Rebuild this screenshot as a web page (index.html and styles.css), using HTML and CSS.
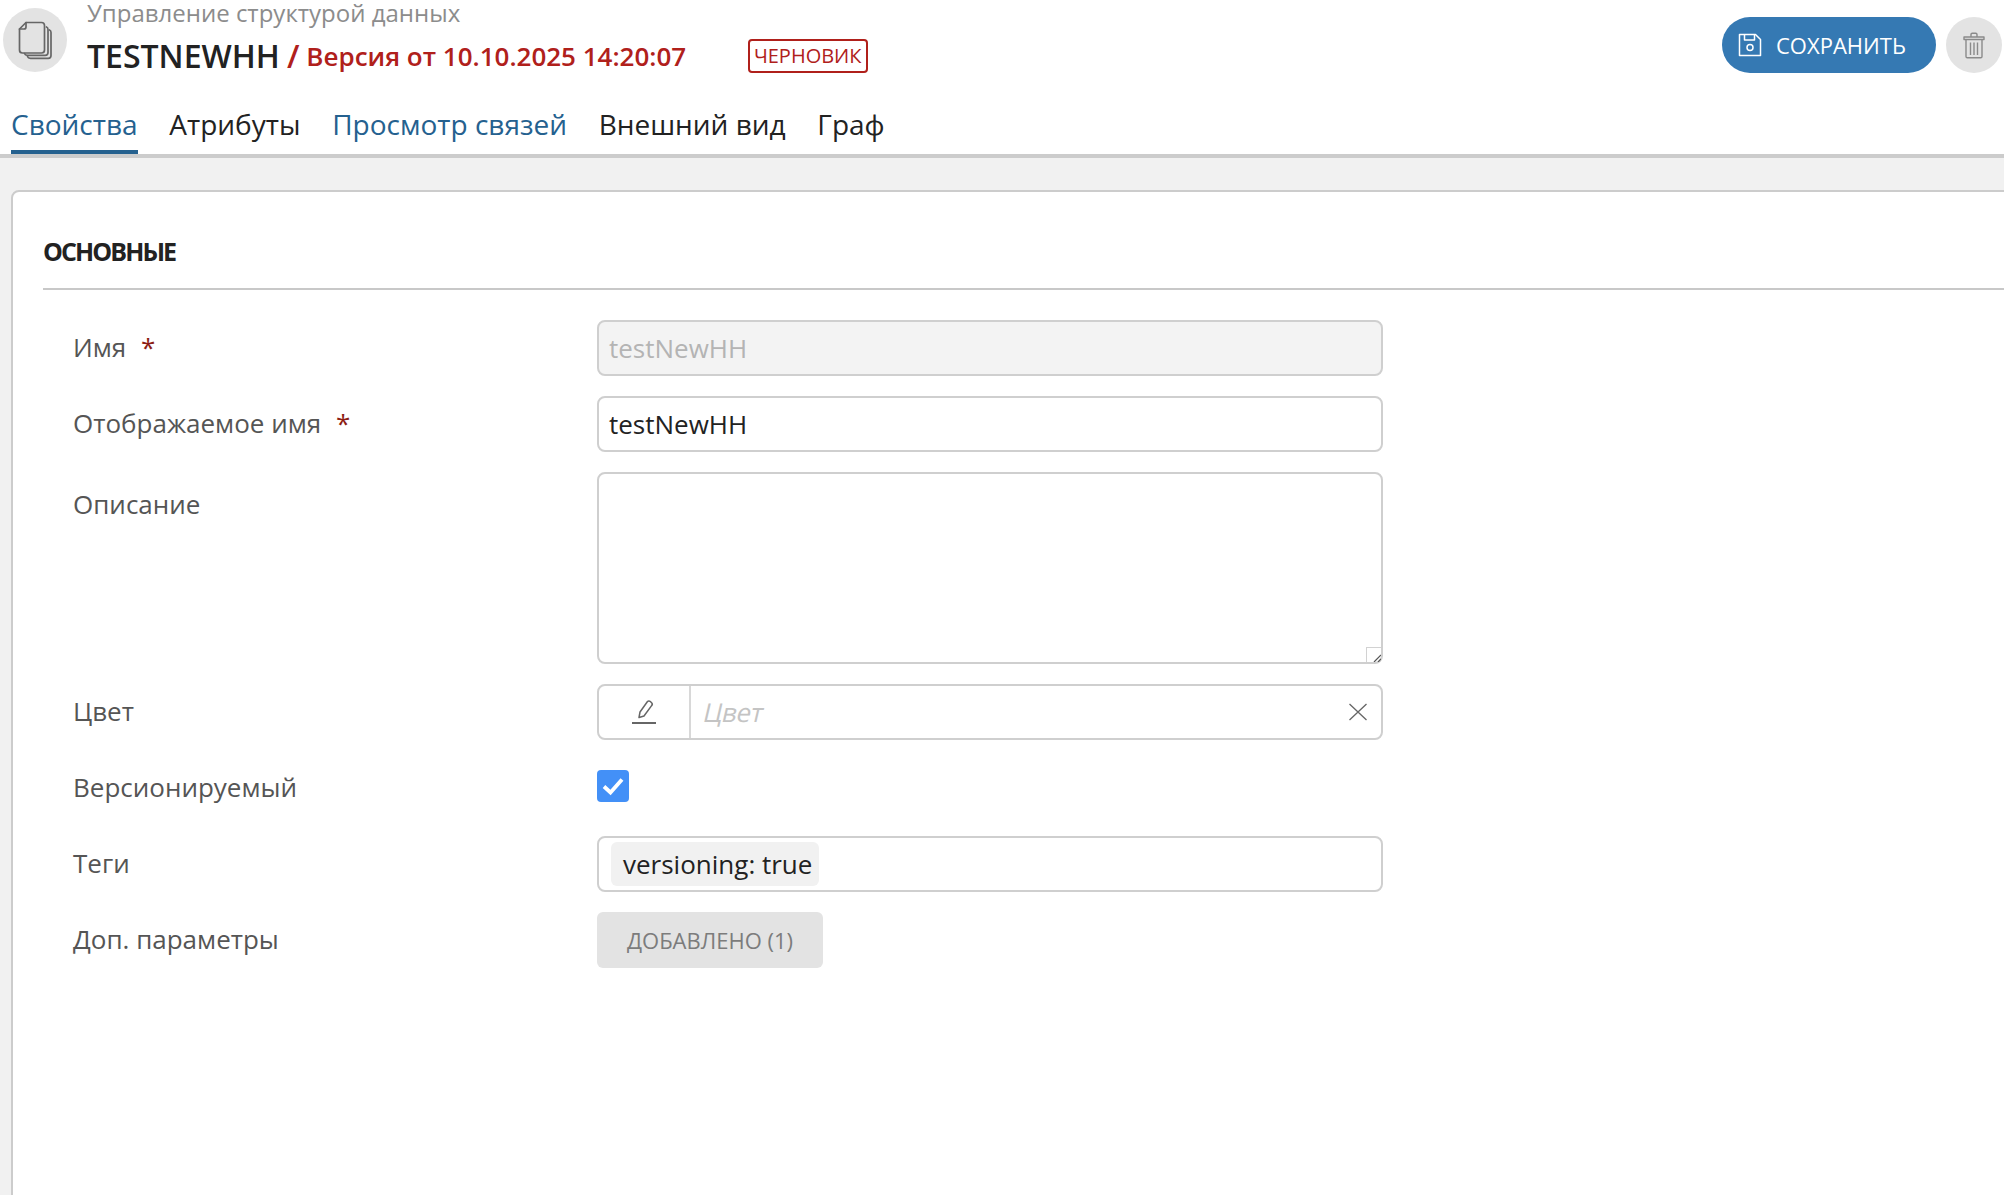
FILE: index.html
```html
<!DOCTYPE html>
<html lang="ru">
<head>
<meta charset="utf-8">
<title>Управление структурой данных</title>
<link rel="stylesheet" href="styles.css">
</head>
<body>
<div class="page">
  <header class="head">
    <div class="topbar">
      <div class="avatar">
        <svg width="34" height="39" viewBox="0 0 34 39" fill="none" stroke="#666" stroke-width="1.700" stroke-linejoin="round" stroke-linecap="round">
          <path d="M31.500 9c1 .4 1.500 1.200 1.500 2.400v23.100c0 1.700-1.100 2.800-2.800 2.800H12.500c-1.500 0-2.600-.6-3-1.800"/>
          <path d="M28.500 6c1 .4 1.500 1.200 1.500 2.400v23.100c0 1.700-1.100 2.800-2.800 2.800H9.500c-1.500 0-2.600-.6-3-1.800"/>
          <path d="M8 1.500h15.500c1.700 0 3 1.300 3 3v24.500c0 1.700-1.300 3-3 3H4.500c-1.700 0-3-1.300-3-3V8z"/>
          <path d="M8 1.500V6c0 1.200-.8 2-2 2H1.500"/>
        </svg>
      </div>
      <div class="titles">
        <div class="crumb">Управление структурой данных</div>
        <div class="titleline">
          <span class="name">TESTNEWHH</span>
          <span class="version"><span class="slash">/</span><span class="stamp">Версия от 10.10.2025 14:20:07</span></span>
          <span class="draft">ЧЕРНОВИК</span>
        </div>
      </div>
      <div class="actions">
        <button class="save" type="button">
          <svg width="24" height="24" viewBox="0 0 24 24" fill="none" stroke="#fff" stroke-width="1.500" stroke-linejoin="round">
            <path d="M1.500 1.500h16l5 5v16h-21z"/>
            <path d="M6.500 1.500v5.500h10V1.500"/>
            <circle cx="12" cy="14.500" r="3"/>
          </svg>
          <span>СОХРАНИТЬ</span>
        </button>
        <button class="trash" type="button" aria-label="Удалить">
          <svg width="22" height="27" viewBox="0 0 22 27" fill="none" stroke="#8a8a8a" stroke-width="1.400" stroke-linejoin="round">
            <path d="M1 5h20v2.500H1z"/>
            <path d="M8 5V2.500c0-.8.5-1.300 1.300-1.300h3.400c.8 0 1.300.5 1.300 1.300V5"/>
            <path d="M3 7.500V24.500c0 .8.500 1.300 1.300 1.300h13.400c.8 0 1.300-.5 1.300-1.300V7.500"/>
            <path d="M7.500 10.500v12.500M11 10.500v12.500M14.500 10.500v12.500"/>
          </svg>
        </button>
      </div>
    </div>
    <nav class="tabs">
      <a class="tab active">Свойства</a>
      <a class="tab">Атрибуты</a>
      <a class="tab link">Просмотр связей</a>
      <a class="tab">Внешний вид</a>
      <a class="tab">Граф</a>
    </nav>
  </header>
  <main class="content">
    <section class="card">
      <h2 class="section">ОСНОВНЫЕ</h2>
      <div class="form">
        <div class="row">
          <div class="label">Имя <span class="req">*</span></div>
          <div class="field input disabled">testNewHH</div>
        </div>
        <div class="row">
          <div class="label">Отображаемое имя <span class="req">*</span></div>
          <div class="field input">testNewHH</div>
        </div>
        <div class="row">
          <div class="label label-top">Описание</div>
          <div class="field area"><span class="grip"><svg width="8" height="8" viewBox="0 0 8 8" stroke="#555" stroke-width="1.200"><path d="M1 8 8 1M5 8l3-3"/></svg></span></div>
        </div>
        <div class="row">
          <div class="label">Цвет</div>
          <div class="field color">
            <span class="picker">
              <svg width="24" height="26" viewBox="0 0 24 26" fill="none" stroke="#666" stroke-width="1.500" stroke-linejoin="round">
                <path d="M7 18.500 8 13 15.500 2.500c.8-.8 2-.8 2.800 0l1.300 1.300c.8.8.8 2 0 2.800L12 17z"/>
                <path d="M0 24h24" stroke-width="2"/>
              </svg>
            </span>
            <span class="placeholder">Цвет</span>
            <svg class="clear" width="20" height="20" viewBox="0 0 20 20" stroke="#666" stroke-width="1.300"><path d="M1.500 2l17 16M18.500 2l-17 16"/></svg>
          </div>
        </div>
        <div class="row row-check">
          <div class="label">Версионируемый</div>
          <span class="check">
            <svg width="24" height="20" viewBox="0 0 24 20" fill="none" stroke="#fff" stroke-width="3.800"><path d="M3 10.500 9.500 16.500 21 3.500"/></svg>
          </span>
        </div>
        <div class="row">
          <div class="label">Теги</div>
          <div class="field tags"><span class="chip">versioning: true</span></div>
        </div>
        <div class="row">
          <div class="label">Доп. параметры</div>
          <button class="added" type="button">ДОБАВЛЕНО (1)</button>
        </div>
      </div>
    </section>
  </main>
</div>
</body>
</html>
```

FILE: styles.css
```css
html, body {
  margin: 0;
  height: 100%;
  overflow: hidden;
  background: #fff;
}
body {
  font-family: "Open Sans", "Noto Sans", sans-serif;
  color: #222;
}
.page {
  height: 100%;
  overflow: hidden;
  display: flex;
  flex-direction: column;
}
.head {
  height: 158px;
  box-sizing: border-box;
  border-bottom: 4px solid #ccc;
  display: flex;
  flex-direction: column;
  flex: none;
}
.topbar {
  display: flex;
  align-items: flex-start;
  height: 112px;
  padding-left: 3px;
}
.avatar {
  width: 64px;
  height: 64px;
  margin-top: 8px;
  border-radius: 50%;
  background: #e3e3e3;
  display: flex;
  align-items: center;
  justify-content: center;
  flex: none;
}
.titles {
  margin-left: 20px;
  flex: 1;
}
.crumb {
  font-size: 24px;
  line-height: 26px;
  color: #8c8c8c;
  height: 28px;
}
.titleline {
  display: flex;
  align-items: baseline;
  height: 56px;
  padding: 6px 0;
  box-sizing: border-box;
}
.name {
  font-size: 32px;
  font-weight: 600;
  color: #222;
}
.version {
  margin-left: 7px;
  font-size: 26px;
  font-weight: 600;
  color: #b0201b;
  width: 461px;
  white-space: nowrap;
}
.slash {
  font-size: 32px;
  margin-right: 7px;
}
.stamp {
  vertical-align: 2px;
}
.draft {
  align-self: center;
  font-size: 20px;
  line-height: 30px;
  padding: 0 4px;
  border: 2px solid #b0201b;
  border-radius: 4px;
  color: #b0201b;
}
.actions {
  display: flex;
  gap: 10px;
  margin-top: 17px;
  padding-right: 2px;
}
.save {
  width: 214px;
  height: 56px;
  border: 0;
  border-radius: 28px;
  background: #3579b3;
  color: #fff;
  font: 400 22px "Open Sans", sans-serif;
  display: flex;
  align-items: center;
  gap: 14px;
  padding: 0 0 0 16px;
}
.trash {
  width: 56px;
  height: 56px;
  border: 0;
  border-radius: 50%;
  background: #e3e3e3;
  display: flex;
  align-items: center;
  justify-content: center;
  padding: 0;
}
.tabs {
  display: flex;
  gap: 31.700px;
  padding-left: 11px;
  height: 42px;
}
.tab {
  font-size: 28px;
  line-height: 25px;
  height: 42px;
  box-sizing: border-box;
  color: #222;
  white-space: nowrap;
}
.tab.active {
  color: #25618f;
  border-bottom: 4px solid #25618f;
}
.tab.link {
  color: #25618f;
}
.content {
  flex: 1;
  background: #f1f1f1;
  padding: 32px 0 0 11px;
  min-height: 0;
}
.card {
  height: 1100px;
  margin-right: -20px;
  background: #fff;
  border: 2px solid #ccc;
  border-radius: 8px;
  padding: 0 0 0 30px;
  box-sizing: border-box;
}
.section {
  margin: 0;
  height: 98px;
  padding-top: 32px;
  line-height: 54px;
  font-size: 25px;
  font-weight: 700;
  letter-spacing: -1.900px;
  color: #222;
  border-bottom: 2px solid #c8c8c8;
  box-sizing: border-box;
}
.form {
  margin-top: 30px;
  padding-left: 30px;
  display: flex;
  flex-direction: column;
  gap: 20px;
}
.row {
  display: flex;
  align-items: flex-start;
}
.label {
  width: 524px;
  flex: none;
  font-size: 26px;
  line-height: 55px;
  color: #555;
}
.label-top {
  line-height: 64px;
}
.req {
  color: #8c1c13;
  margin-left: 8px;
}
.field {
  width: 786px;
  box-sizing: border-box;
  border: 2px solid #cfcfcf;
  border-radius: 8px;
  background: #fff;
}
.input {
  height: 56px;
  padding: 0 10px;
  font-size: 26px;
  line-height: 52px;
  color: #222;
}
.disabled {
  background: #f3f3f3;
  color: #b4b4b4;
}
.area {
  height: 192px;
  position: relative;
}
.grip {
  position: absolute;
  right: 0;
  bottom: 0;
  width: 14px;
  height: 14px;
  border: 1px solid #d2d2d2;
  border-width: 1px 0 0 1px;
  display: flex;
  align-items: flex-end;
  justify-content: flex-end;
}
.color {
  height: 56px;
  display: flex;
  align-items: center;
}
.picker {
  width: 92px;
  height: 100%;
  border-right: 2px solid #d8d8d8;
  display: flex;
  align-items: center;
  justify-content: center;
  flex: none;
  box-sizing: border-box;
}
.placeholder {
  flex: 1;
  margin-left: 13px;
  font-size: 26px;
  letter-spacing: -.4px;
  color: #c4c4c4;
  transform: skewX(-13deg);
  transform-origin: left center;
}
.clear {
  margin-right: 13px;
}
.row-check {
  height: 56px;
}
.check {
  width: 32px;
  height: 32px;
  margin-top: 10px;
  border-radius: 4px;
  background: #4390f7;
  display: flex;
  align-items: center;
  justify-content: center;
}
.tags {
  height: 56px;
  padding: 4px 12px;
}
.chip {
  display: inline-block;
  height: 44px;
  padding: 0 7px 0 12px;
  border-radius: 6px;
  background: #f1f1f1;
  font-size: 26px;
  line-height: 44px;
  color: #222;
}
.added {
  width: 226px;
  height: 56px;
  border: 0;
  border-radius: 6px;
  background: #e3e3e3;
  color: #7c7c7c;
  font: 400 22px "Open Sans", sans-serif;
  padding: 0;
}
```
